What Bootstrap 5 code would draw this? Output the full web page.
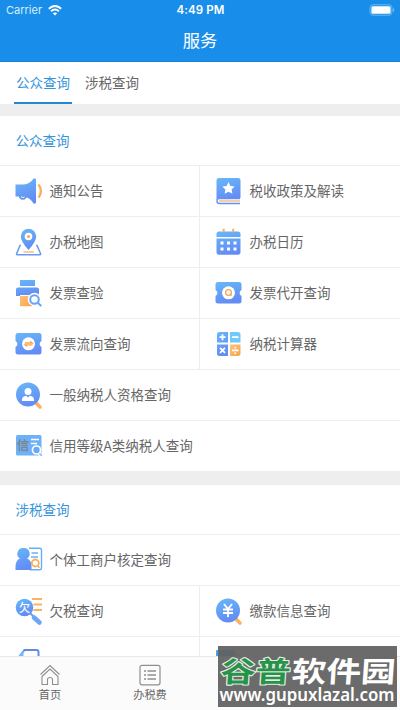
<!DOCTYPE html>
<html lang="zh-CN">
<head>
<meta charset="utf-8">
<meta name="viewport" content="width=device-width, initial-scale=1">
<title>服务</title>
<link href="https://cdn.jsdelivr.net/npm/bootstrap@5.3.0/dist/css/bootstrap.min.css" rel="stylesheet">
<style>
body{font-family:"Noto Sans CJK SC",sans-serif;font-size:13.5px;line-height:20px;color:#666;background:#fff}
.screen{width:400px;height:710px}
.app-head{height:62px;background:#188eea;border-bottom:1px solid #1783d8}
.status{height:20px;font:11px/20px Inter,sans-serif;padding:0 5px 0 6px}
.status>div{flex:1 1 0}
.carrier{gap:6px;color:#d9eefd}
.clock{font-weight:600;font-size:11.5px;letter-spacing:.1px}
.app-title{font-size:17.3px;line-height:40px;height:41px}
.tabs{height:42px;padding-left:14px}
.tabs .nav-link{color:#666;padding:10px 0 0;height:42px;line-height:20px;border-radius:0}
.tabs .nav-link.active{color:#3595dd;border-bottom:2px solid #2487d2;width:58px;text-align:center}
.tabs .second{margin-left:13px}
.band{background:#eee;flex:none}
.heading{height:49px;padding:0 0 2px 15.5px;color:#3595dd;flex:none}
.line{flex:none;height:51px;border-top:1px solid #eee}
.cell{height:50px;padding-left:15px;gap:6.5px}
.line.cell{height:51px}
.cell svg{width:28px;height:28px;flex:none;overflow:visible}
.cell span{padding-bottom:2px}
.row>.cell+.cell{border-left:1px solid #eee;margin-left:-1px}
.bottom{height:54px;background:#fbfbfb;border-top:1px solid #e8e8e8;font-size:11.2px;line-height:14px}
.bottom>a{width:100px;padding-top:7px;color:#666;text-decoration:none}
.bottom svg{width:22px;height:22px;margin-bottom:1px}
.stamp{left:218px;top:646px;width:179px;height:61px;background:rgba(98,98,98,.94)}
.stamp svg{display:block}
</style>
</head>
<body>
<svg width="0" height="0" class="position-absolute" aria-hidden="true"><defs>
<linearGradient id="b" x1="0" y1="0" x2=".3" y2="1"><stop stop-color="#67b8f8"/><stop offset="1" stop-color="#638df4"/></linearGradient>
<linearGradient id="o" x1="0" y1="0" x2="1" y2="1"><stop stop-color="#ffc378"/><stop offset="1" stop-color="#f7a34d"/></linearGradient>
</defs></svg>
<main class="screen d-flex flex-column overflow-hidden position-relative">
<header class="app-head text-white flex-shrink-0">
<div class="status d-flex align-items-center">
<div class="carrier d-flex align-items-center">Carrier<svg width="14" height="11" viewBox="0 0 14 11" fill="none" stroke="#fff" stroke-width="1.9"><path d="M.8 3.7Q7-1.9 13.2 3.7M3.1 6.2q3.9-3.5 7.8 0"/><path d="M7 10.6 4.8 8.3q2.2-1.8 4.4 0z" fill="#fff" stroke="none"/></svg></div>
<div class="text-center clock">4:49 PM</div>
<div class="d-flex justify-content-end"><svg width="26" height="12" viewBox="0 0 26 12"><rect x="1" y=".8" width="22" height="10.400" rx="3" fill="none" stroke="#6bb9f3"/><rect x="2.400" y="2.300" width="19.200" height="7.400" rx="1.500" fill="#fff"/><path d="M24.300 4q2 2 0 4z" fill="#8bc8f6"/></svg></div>
</div>
<div class="app-title text-center">服务</div>
</header>
<nav class="tabs nav flex-shrink-0"><a class="nav-link active" href="#">公众查询</a><a class="nav-link second" href="#">涉税查询</a></nav>
<div class="flex-grow-1 overflow-hidden d-flex flex-column">
<div class="band" style="height:12px"></div>
<div class="heading d-flex align-items-center">公众查询</div>
<div class="line row g-0">
<div class="col-6 cell d-flex align-items-center"><svg viewBox="0 0 28 28"><path d="M.5 7.500H7q8 0 11.500-6 2.500-.5 2.500 1v23q0 1.500-2.500 1Q15 21 11.500 20.500a4 4 0 0 1-7 .5L3.500 19.500h-3z" fill="url(#b)"/><path d="M6 19.500q1.500 2 3.500.5" stroke="#fff" fill="none"/><path d="M23.500 7.500q5 6.500 0 13" fill="none" stroke="#fbae5d" stroke-width="2.300"/></svg><span>通知公告</span></div>
<div class="col-6 cell d-flex align-items-center"><svg viewBox="0 0 28 28"><path d="M4 1h19q2.500 0 2.500 2.500V21H4q-2 0-2.500 2V3.500Q1.500 1 4 1z" fill="url(#b)"/><path d="m13.500 5 1.900 3.900 4.300.6-3.100 3 .8 4.300-3.900-2-3.800 2 .7-4.300-3.100-3 4.300-.6z" fill="#fff"/><path d="M25 21.500H4.500Q2 21.500 2 24t2.500 2.500H25" fill="none" stroke="#668ff4" stroke-width="1.400"/><path d="M4 24h21" stroke="#fbb365" stroke-width="1.300"/></svg><span>税收政策及解读</span></div>
</div>
<div class="line row g-0">
<div class="col-6 cell d-flex align-items-center"><svg viewBox="0 0 28 28"><path d="M6 17.500H5L1.500 26q0 .8 1 .8h22.200q1 0 1-.8L22 17.500h-1" fill="none" stroke="#679af5" stroke-width="1.500"/><path d="M13.500 22Q5.800 13.500 5.800 8.500a7.700 7.700 0 0 1 15.400 0q0 5-7.700 13.500z" fill="url(#b)"/><circle cx="13.500" cy="8.500" r="3.800" fill="#fff"/><circle cx="13.500" cy="8.500" r="1.600" fill="#f9a850"/><path d="M8.500 24h10.300" stroke="#fbb365" stroke-width="1.300"/></svg><span>办税地图</span></div>
<div class="col-6 cell d-flex align-items-center"><svg viewBox="0 0 28 28"><path d="M1.500 9V6q0-2.500 2.500-2.500h19q2.500 0 2.500 2.500v3zM1.500 10.500h24V24q0 2.800-2.500 2.800H4q-2.500 0-2.500-2.800z" fill="url(#b)"/><path d="M8.700.7v3.500M18.200.7v3.500" stroke="#fbad59" stroke-width="2"/><g fill="#fff"><path d="M5.500 13.500h3v3h-3zm6.500 0h3v3h-3zm6.500 0h3v3h-3zm-13 6h3v3h-3zm6.500 0h3v3h-3zm6.500 0h3v3h-3z"/></g></svg><span>办税日历</span></div>
</div>
<div class="line row g-0">
<div class="col-6 cell d-flex align-items-center"><svg viewBox="0 0 28 28"><path d="M5 1h15v6H5zM3 8.500h19q2 0 2 2V17H1v-6.500q0-2 2-2z" fill="url(#b)"/><path d="M5 16.500h12v10.700H5z" fill="url(#o)"/><path d="M5 16.500h12" stroke="#fff"/><circle cx="19.500" cy="20.500" r="5.800" fill="#fff" stroke="#fff" stroke-width="2"/><circle cx="19.500" cy="20.500" r="4.300" fill="#fff" stroke="#65a3f6" stroke-width="2"/><path d="m23 24 3.300 3" stroke="#65a3f6" stroke-width="2"/></svg><span>发票查验</span></div>
<div class="col-6 cell d-flex align-items-center"><svg viewBox="0 0 28 28"><path d="M3 3h21q2.500 0 2.500 2.500V11a3.300 3.300 0 0 0 0 6v5q0 2.500-2.500 2.500H3Q.5 24.500.5 22v-5a3.300 3.300 0 0 0 0-6V5.500Q.5 3 3 3z" fill="url(#b)"/><circle cx="13.500" cy="13.800" r="6.500" fill="#fff"/><circle cx="13.500" cy="13.500" r="2.900" fill="none" stroke="#fba44d" stroke-width="1.300"/><path d="m15 15 1.600 1.600" stroke="#fba44d" stroke-width="1.300"/></svg><span>发票代开查询</span></div>
</div>
<div class="line row g-0">
<div class="col-6 cell d-flex align-items-center"><svg viewBox="0 0 28 28"><path d="M3 3h21q2.500 0 2.500 2.500V11a3.300 3.300 0 0 0 0 6v5q0 2.500-2.500 2.500H3Q.5 24.500.5 22v-5a3.300 3.300 0 0 0 0-6V5.500Q.5 3 3 3z" fill="url(#b)"/><circle cx="13.500" cy="13.800" r="6.500" fill="#fff"/><path d="M9.800 13h7.500l-2-1.800M17.500 14.800H10l2 1.800" fill="none" stroke="#fba44d" stroke-width="1.300"/></svg><span>发票流向查询</span></div>
<div class="col-6 cell d-flex align-items-center"><svg viewBox="0 0 28 28"><path d="M4.500 2H13v10.500H2V4.500Q2 2 4.500 2zM2 14.500h11V26H4.500Q2 26 2 23.500z" fill="url(#b)"/><path d="M15 2h8q2.500 0 2.500 2.500v8H15z" fill="#71c8fa"/><path d="M15 14.500h10.500v9Q25.500 26 23 26h-8z" fill="url(#o)"/><path d="M4.500 7.200h6M7.500 4.200v6M17 7.200h6.500M5 17.800l5 5m0-5-5 5M17 20.300h6.500" stroke="#fff" stroke-width="1.800"/><path d="M19.400 16.700h1.700v1.700h-1.700zm0 5.500h1.700v1.700h-1.700z" fill="#fff"/></svg><span>纳税计算器</span></div>
</div>
<div class="line cell d-flex align-items-center"><svg viewBox="0 0 28 28"><path d="m20.500 21.500 4.500 4.500" stroke="#fbb062" stroke-width="3.500" stroke-linecap="round"/><circle cx="13" cy="13.500" r="12" fill="url(#b)"/><circle cx="13" cy="10.500" r="3.500" fill="#fff"/><path d="M7 20v-1.500q0-3 4.200-3.800L13 16.500l1.800-1.800q4.200.8 4.200 3.800V20z" fill="#fff"/></svg><span>一般纳税人资格查询</span></div>
<div class="line cell d-flex align-items-center"><svg viewBox="0 0 28 28"><rect x="1" y="3" width="25.500" height="20.500" rx="1.500" fill="#6db2f8"/><text x="1.800" y="18" font-size="12.500" font-weight="bold" fill="#7f8590">信</text><path d="M16 7.500h8M16 11.500h6" stroke="#fff" stroke-width="1.300"/><circle cx="21.500" cy="18" r="4" fill="#69a8f7" stroke="#fff" stroke-width="1.700"/><path d="m24 21 3 3" stroke="#fff" stroke-width="3.500"/><path d="m24.500 21.500 2.300 2.300" stroke="#79b7f8" stroke-width="1.500"/></svg><span>信用等级A类纳税人查询</span></div>
<div class="band" style="height:14px"></div>
<div class="heading d-flex align-items-center">涉税查询</div>
<div class="line cell d-flex align-items-center"><svg viewBox="0 0 28 28"><path d="M14 2.300h10.500q2 0 2 2v17.500q0 2-2 2H15" fill="none" stroke="#65aff7" stroke-width="1.400"/><path d="M16.500 7H23m-7 4h7" stroke="#69b1f7" stroke-width="1.400"/><path d="M8.500 2a5.700 5.700 0 0 1 3.500 10.500q4.500 1.500 4.500 7.500v4H.5v-3q0-7 4.500-8.500A5.700 5.700 0 0 1 8.500 2z" fill="url(#b)"/><circle cx="20.300" cy="17" r="3.500" fill="#fff" stroke="#fbad5a" stroke-width="1.800"/><path d="m22.500 19.500 2 2.200" stroke="#fbad5a" stroke-width="1.700"/></svg><span>个体工商户核定查询</span></div>
<div class="line row g-0">
<div class="col-6 cell d-flex align-items-center"><svg viewBox="0 0 28 28"><path d="M17 2h10M18.500 7.500H27M18.500 13H27" stroke="#fbb062" stroke-width="1.800"/><path d="m15 16 3 3" stroke="#6b9cf4" stroke-width="2"/><path d="m19 20.500 5.500 5" stroke="#6ba6f7" stroke-width="4.600" stroke-linecap="round"/><circle cx="9.500" cy="10.500" r="8.800" fill="url(#b)"/><text x="4" y="14.500" font-size="11" font-weight="500" fill="#fff">欠</text></svg><span>欠税查询</span></div>
<div class="col-6 cell d-flex align-items-center"><svg viewBox="0 0 28 28"><path d="m20.500 21.500 4.500 4.500" stroke="#fbb062" stroke-width="3.500" stroke-linecap="round"/><circle cx="13" cy="13.500" r="12" fill="url(#b)"/><path d="m9 7 4 5 4-5M8 12.500h10M8 16h10M13 12v8" fill="none" stroke="#fff" stroke-width="1.900"/></svg><span>缴款信息查询</span></div>
</div>
<div class="line row g-0">
<div class="col-6 cell d-flex align-items-center"><svg viewBox="0 0 28 28"><path d="M4 9 9.500 2h12q2 0 2 2v20H4z" fill="none" stroke="#628be8" stroke-width="2"/><path d="M3 9 8.500 2v7z" fill="#71bdf8"/></svg></div>
<div class="col-6 cell d-flex align-items-center"><svg viewBox="0 0 28 28"><rect x="1" y="2" width="19" height="20" rx="1" fill="#4c9fea"/><path d="M19 3.500 24 9" stroke="#fbb062" stroke-width="2"/></svg></div>
</div>
</div>
<footer class="bottom d-flex flex-shrink-0">
<a href="#" class="d-flex flex-column align-items-center"><svg viewBox="0 0 22 22" fill="none" stroke="#8e8e8e" stroke-width="1.100"><path d="m1.500 10.500 9.500-9 9.500 9M3 12.500l8-7.500 8 7.500V20.500h-5.500v-5q0-2-2.500-2t-2.500 2v5H3z"/></svg>首页</a>
<a href="#" class="d-flex flex-column align-items-center"><svg viewBox="0 0 22 22" fill="none" stroke="#8e8e8e" stroke-width="1.200"><rect x="1" y="1.300" width="20" height="19.500" rx="2"/><path d="M5 7h2m1.500 0H17M5 11h2m1.500 0H17M5 15h2m1.500 0H17" stroke-width="1.500"/></svg>办税费</a>
</footer>
<div class="stamp position-absolute"><svg width="179" height="61" viewBox="0 0 179 61" font-family="'Noto Sans CJK SC',sans-serif" font-weight="700" paint-order="stroke" stroke-linejoin="round">
<g transform="translate(0 36) skewX(-4) scale(1 .84)"><text x="2" y="0" font-size="34" textLength="70" lengthAdjust="spacingAndGlyphs" fill="#279349" stroke="#e5efe7" stroke-width="2.500">谷普</text>
<text x="73" y="0" font-size="34" textLength="104" lengthAdjust="spacingAndGlyphs" fill="#fff">软件园</text></g>
<text x="1.500" y="54.500" font-family="'Noto Sans',sans-serif" font-size="17.500" font-weight="600" textLength="175" lengthAdjust="spacingAndGlyphs" fill="#fff">www.gupuxlazal.com</text>
</svg></div>
</main>
<script src="https://cdn.jsdelivr.net/npm/bootstrap@5.3.0/dist/js/bootstrap.bundle.min.js"></script>
</body>
</html>
